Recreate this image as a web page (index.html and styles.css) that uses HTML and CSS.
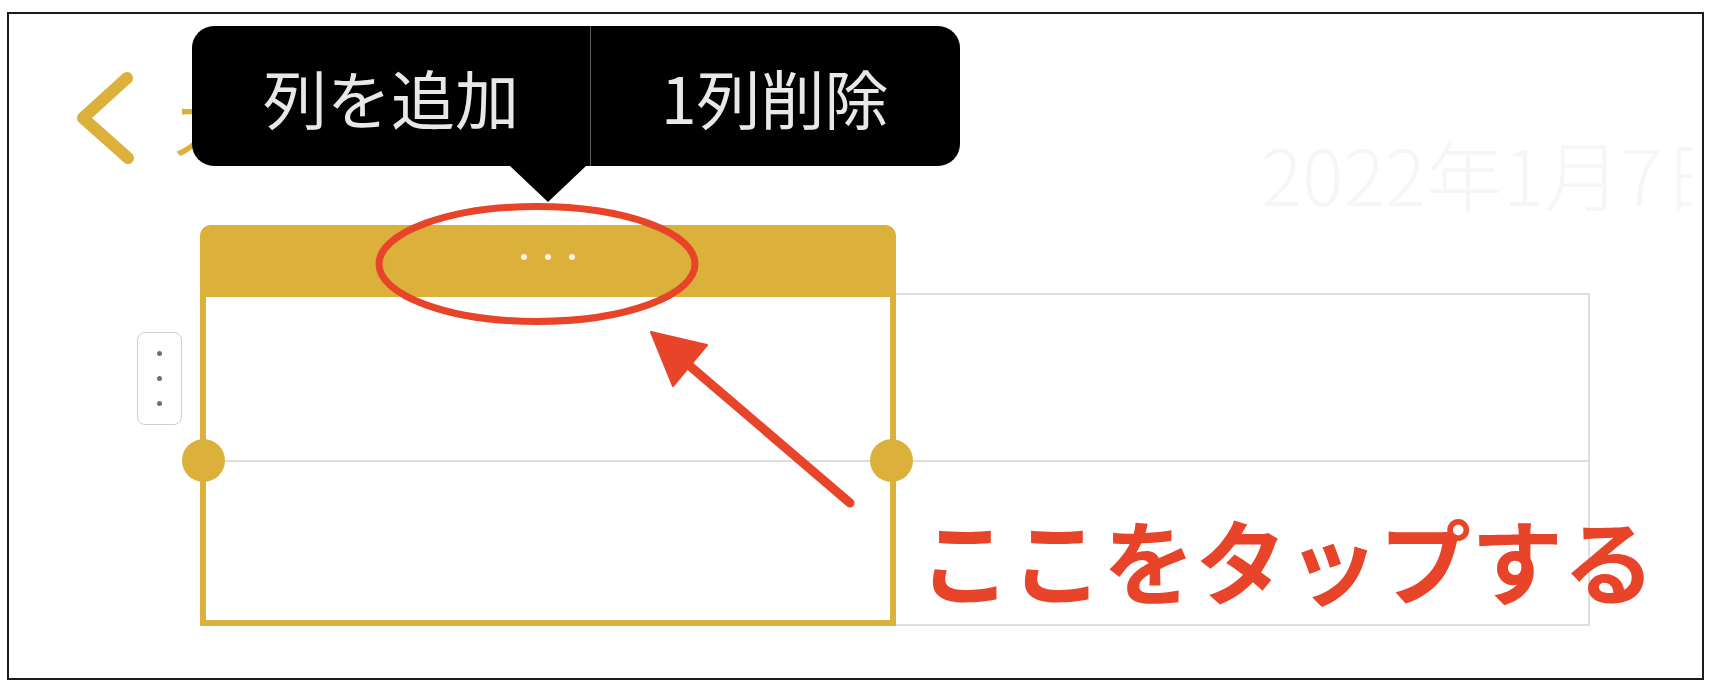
FILE: index.html
```html
<!DOCTYPE html>
<html lang="ja">
<head>
<meta charset="utf-8">
<title>列の編集</title>
<link rel="stylesheet" href="styles.css">
</head>
<body>
<div class="frame">
  <div class="topbar">
    <svg class="back" width="70" height="104" viewBox="0 0 70 104">
      <polyline points="57,12 13,52 58,92" fill="none" stroke="#DBB13C" stroke-width="12" stroke-linecap="round" stroke-linejoin="round"/>
    </svg>
    <div class="title">スケジュール</div>
    <div class="date">2022年1月7日</div>
  </div>

  <div class="table">
    <div class="blank"></div>
    <div class="col-head"><span class="hdot"></span><span class="hdot"></span><span class="hdot"></span></div>
    <div class="blank"></div>

    <div class="row-handle"><span class="rdot"></span><span class="rdot"></span><span class="rdot"></span></div>
    <div class="cell sel first"></div>
    <div class="cell plain first"></div>

    <div class="blank"></div>
    <div class="cell sel last"><span class="knob knob-l"></span><span class="knob knob-r"></span></div>
    <div class="cell plain last"></div>
  </div>

  <div class="popover">
    <div class="pop-btn">列を追加</div>
    <div class="pop-btn pop-sep">1列削除</div>
  </div>

  <svg class="annot" width="1693" height="664" viewBox="9 14 1693 664">
    <ellipse cx="537" cy="264" rx="158" ry="57.5" fill="none" stroke="#E8442A" stroke-width="7"/>
    <line x1="850" y1="503" x2="684" y2="361" stroke="#E8442A" stroke-width="9" stroke-linecap="round"/>
    <polygon points="651,332 707,345 673,386" fill="#E8442A" stroke="#E8442A" stroke-width="2" stroke-linejoin="round"/>
  </svg>

  <div class="note">ここをタップする</div>
</div>
</body>
</html>
```

FILE: styles.css
```css
* { box-sizing: border-box; }

body {
  margin: 0;
  background: #ffffff;
  font-family: "Noto Sans CJK JP", "Noto Sans", sans-serif;
}

.frame {
  position: relative;
  margin: 12px 0 0 7px;
  width: 1697px;
  height: 668px;
  border: 2px solid #1c1c1c;
  overflow: hidden;
  background: #ffffff;
}

/* top navigation */
.topbar {
  display: flex;
  align-items: flex-start;
  height: 211px;
  padding-left: 61px;
  margin-right: 10px;
  overflow: hidden;
}

.back {
  flex-shrink: 0;
  margin-top: 52px;
}

.title {
  flex-shrink: 0;
  width: 1091px;
  margin-left: 30px;
  margin-top: 80px;
  font-size: 64px;
  line-height: 1;
  color: #DBB13C;
  white-space: nowrap;
}

.date {
  flex-shrink: 0;
  margin-top: 120px;
  font-size: 77px;
  font-weight: 300;
  line-height: 1;
  color: #f6f6f6;
  white-space: nowrap;
}

/* table */
.table {
  display: grid;
  grid-template-columns: 63px 696px 694px;
  grid-template-rows: 68px 167px 166px;
  margin-left: 128px;
}

.col-head {
  display: flex;
  align-items: center;
  justify-content: center;
  gap: 18px;
  padding-bottom: 4px;
  background: #DBB13C;
  border-radius: 11px 11px 0 0;
}

.hdot {
  width: 6px;
  height: 6px;
  border-radius: 50%;
  background: #fff6dc;
}

.row-handle {
  align-self: start;
  justify-self: start;
  margin-top: 39px;
  width: 45px;
  height: 93px;
  border: 1.5px solid #cfcfcf;
  border-radius: 8px;
  display: flex;
  flex-direction: column;
  align-items: center;
  justify-content: center;
  gap: 20px;
}

.rdot {
  width: 5px;
  height: 5px;
  border-radius: 50%;
  background: #6f6f6f;
}

.cell {
  position: relative;
}

.cell.sel {
  z-index: 1;
  border-left: 6px solid #DBB13C;
  border-right: 6px solid #DBB13C;
}

.cell.sel.first {
  border-top: 4px solid #DBB13C;
}

.cell.sel.last {
  border-top: 2px solid #dedede;
  border-bottom: 6px solid #DBB13C;
}

.cell.plain {
  border-top: 2px solid #dedede;
  border-right: 2px solid #dedede;
}

.cell.plain.last {
  border-bottom: 2px solid #dedede;
}

.knob {
  position: absolute;
  top: -23px;
  width: 43px;
  height: 43px;
  border-radius: 50%;
  background: #DBB13C;
}

.knob-l { left: -24px; }
.knob-r { right: -23px; }

/* popover menu */
.popover {
  position: absolute;
  z-index: 2;
  left: 183px;
  top: 12px;
  height: 140px;
  display: flex;
  background: #000000;
  border-radius: 22px;
}

.popover::after {
  content: "";
  position: absolute;
  left: 318px;
  top: 140px;
  border-left: 38px solid transparent;
  border-right: 38px solid transparent;
  border-top: 36px solid #000000;
}

.pop-btn {
  display: flex;
  align-items: center;
  padding: 0 71px;
  font-size: 64px;
  line-height: 1;
  color: #e8e8e8;
  white-space: nowrap;
}

.pop-sep {
  padding-left: 70px;
  border-left: 1px solid #5a5a5a;
}

/* annotation */
.annot {
  position: absolute;
  z-index: 3;
  left: 0;
  top: 0;
  pointer-events: none;
}

.note {
  position: absolute;
  z-index: 3;
  left: 910px;
  top: 498px;
  font-size: 92px;
  font-weight: 700;
  line-height: 1;
  color: #E8442A;
  white-space: nowrap;
}
```
